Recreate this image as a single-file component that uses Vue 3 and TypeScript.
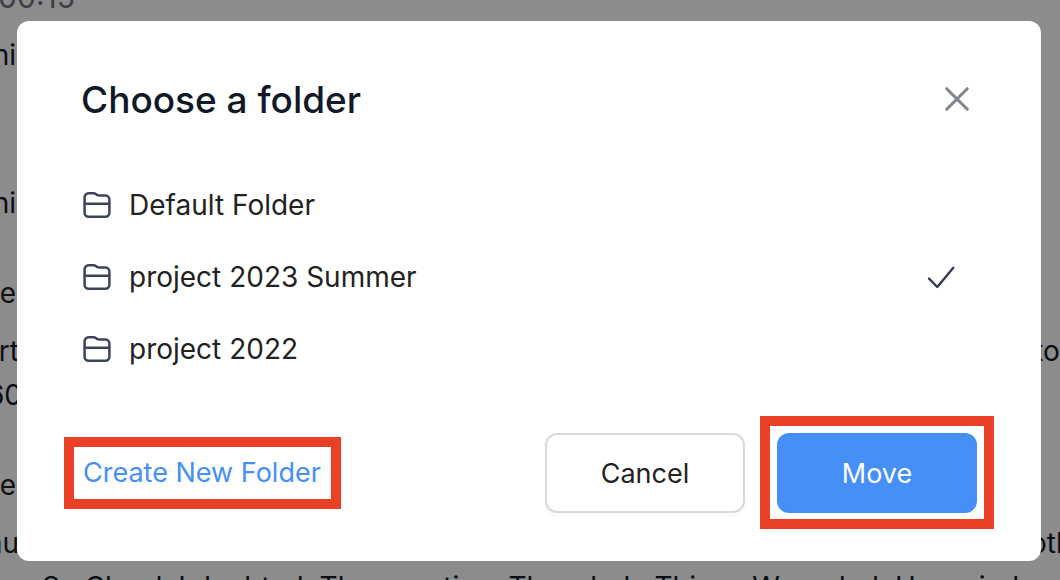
<script setup lang="ts">
import { ref } from 'vue'

interface Line { kind: string; start: string; end?: string }

const lines: Line[] = [
  { kind: 'time', start: '00:15' },
  { kind: 'lead', start: 'hi' },
  { kind: 'lead far', start: 'hi' },
  { kind: 'speaker', start: 'ke' },
  { kind: 'first', start: 'rt', end: 'to' },
  { kind: 'wide', start: '60' },
  { kind: 'speaker', start: 'ke' },
  { kind: 'first long', start: 'nu', end: 'oth' },
  { kind: 'full', start: 'So Cloud, I doubted. The question. The whole Things Wounded. Has mind' },
]

const folders = ['Default Folder', 'project 2023 Summer', 'project 2022']
const selected = ref('project 2023 Summer')
</script>

<template>
  <div class="page">
    <div class="transcript" aria-hidden="true">
      <div v-for="(line, i) in lines" :key="i" class="line" :class="line.kind">
        <span class="start">{{ line.start }}</span>
        <span v-if="line.end" class="end">{{ line.end }}</span>
      </div>
    </div>
    <div class="backdrop">
      <section class="dialog" role="dialog" aria-modal="true" aria-labelledby="dialog-title">
        <header class="head">
          <h1 id="dialog-title">Choose a folder</h1>
          <button class="close" type="button" aria-label="Close">
            <svg width="32" height="32" viewBox="0 0 32 32" fill="none" stroke="#80868b" stroke-width="3" stroke-linecap="round">
              <path d="M5.7 5.7 26.3 26.3M26.3 5.7 5.7 26.3" />
            </svg>
          </button>
        </header>
        <ul class="folders">
          <li v-for="name in folders" :key="name">
            <button class="folder" type="button" :aria-pressed="selected === name" @click="selected = name">
              <svg width="32" height="32" viewBox="0 0 32 32" fill="none" stroke="#3b4459" stroke-width="2.5" stroke-linejoin="round">
                <path d="M3.6 8.3A4 4 0 0 1 7.6 4.3H12.4Q13.8 4.3 14.8 5L16 5.9Q16.9 6.5 18.2 6.5H24.4A4 4 0 0 1 28.4 10.5V23.7A4 4 0 0 1 24.4 27.7H7.6A4 4 0 0 1 3.6 23.7ZM3.6 14.7H28.4" />
              </svg>
              <span class="name">{{ name }}</span>
              <svg v-if="selected === name" class="check" width="32" height="32" viewBox="0 0 32 32" fill="none" stroke="#343c50" stroke-width="2.4" stroke-linecap="round" stroke-linejoin="round">
                <path d="M4 17.6 12.3 26 28.3 6.8" />
              </svg>
            </button>
          </li>
        </ul>
        <footer class="foot">
          <a class="create" href="#">Create New Folder</a>
          <button class="btn" type="button">Cancel</button>
          <button class="btn primary" type="button">Move</button>
        </footer>
      </section>
    </div>
  </div>
</template>

<style>
body {
  margin: 0;
}
</style>

<style scoped>
.page {
  position: relative;
  height: 100vh;
  overflow: hidden;
  background: #fff;
  font-family: Inter, "Liberation Sans", sans-serif;
  font-size: 28px;
  color: #222;
}
.transcript {
  margin-top: -25px;
  color: #111927;
}
.line {
  display: flex;
  justify-content: space-between;
  height: 44px;
  line-height: 44px;
  white-space: nowrap;
}
.start {
  display: flex;
  justify-content: flex-end;
  width: 16px;
}
.end {
  display: flex;
  width: 24px;
}
.time {
  font-size: 30px;
  color: #6c737f;
}
.time .start {
  width: 75px;
}
.lead {
  margin-top: 14px;
}
.far {
  margin-top: 104px;
}
.speaker {
  margin-top: 46px;
  color: #222;
}
.first {
  margin-top: 14px;
}
.first .start {
  width: 19px;
}
.first .end {
  width: 26px;
}
.long .end {
  width: 30px;
}
.wide .start {
  width: 22px;
}
.full .start {
  justify-content: flex-start;
  padding-left: 42px;
}
.backdrop {
  position: absolute;
  inset: 0;
  padding: 21px 19px 19px 17px;
  background: rgba(0, 0, 0, 0.45);
}
.dialog {
  padding: 46px 64px 48px;
  border-radius: 12px;
  background: #fff;
}
.head {
  display: flex;
  align-items: center;
  justify-content: space-between;
  height: 64px;
}
h1 {
  margin: 0;
  padding-top: 2px;
  font-size: 37px;
  font-weight: 500;
  line-height: 64px;
  color: #111927;
}
button {
  font: inherit;
  color: inherit;
  cursor: pointer;
}
.close {
  display: flex;
  padding: 4px;
  border: 0;
  background: none;
}
.folders {
  margin: 38px 0 48px;
  padding: 0;
  list-style: none;
}
.folder {
  display: flex;
  align-items: center;
  gap: 16px;
  width: 100%;
  height: 72px;
  padding: 0 20px 0 0;
  border: 0;
  background: none;
  text-align: left;
}
.name {
  flex: 1;
}
.foot {
  display: flex;
  align-items: center;
  gap: 32px;
  font-size: 27px;
}
.create {
  margin-left: -7px;
  margin-right: auto;
  padding: 0 10px 0 9px;
  line-height: 52px;
  outline: 10px solid #ea4025;
  color: #458ff7;
  text-decoration: none;
}
.btn {
  width: 200px;
  height: 80px;
  border: 2px solid #d9d9d9;
  border-radius: 12px;
  background: #fff;
  box-shadow: 0 4px 0 rgba(0, 0, 0, 0.02);
}
.primary {
  position: relative;
  border-color: #458ff7;
  background: #458ff7;
  box-shadow: none;
  color: #fff;
}
/* square frame around the rounded button */
.primary::after {
  content: "";
  position: absolute;
  inset: -19px -19px -18px;
  border: 10px solid #ea4025;
}
</style>
